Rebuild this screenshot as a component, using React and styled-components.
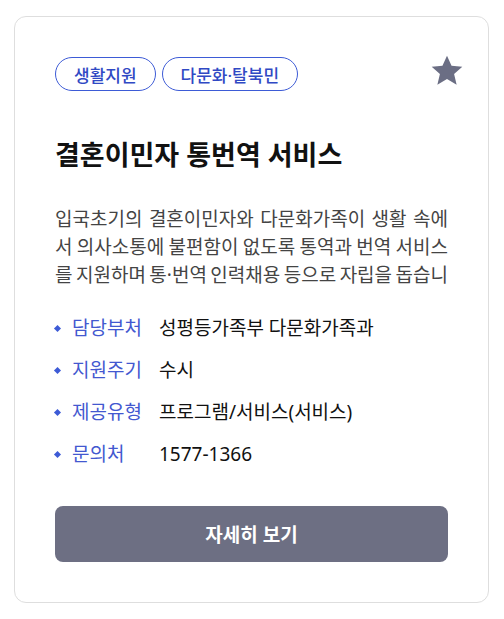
import React from 'react'
import styled, { createGlobalStyle } from 'styled-components'

const GlobalStyle = createGlobalStyle`
  body {
    margin: 0;
    background: #ffffff;
    font-family: "Noto Sans", "Noto Sans CJK KR", sans-serif;
  }
`

const Page = styled.div`
  padding: 16px 15px 16px 14px;
`

const Card = styled.div`
  width: 475px;
  box-sizing: border-box;
  border: 1px solid #dedede;
  border-radius: 12px;
  padding: 40px 40px 40px 40px;
  background: #fff;
`

const TopRow = styled.div`
  display: flex;
  align-items: flex-start;
  justify-content: space-between;
`

const Tags = styled.div`
  display: flex;
  gap: 6px;
`

const Tag = styled.span`
  display: inline-flex;
  align-items: center;
  height: 34px;
  box-sizing: border-box;
  padding: 0 18px;
  border: 1px solid #3d5bd6;
  border-radius: 17px;
  color: #3049c4;
  font-size: 17px;
  font-weight: 500;
`

const StarButton = styled.button`
  border: 0;
  background: none;
  padding: 0;
  margin: -4px -16px 0 0;
  width: 34px;
  height: 36px;
  display: flex;
  align-items: center;
  justify-content: center;
  cursor: pointer;
`

const Title = styled.h2`
  margin: 46px 0 0;
  font-size: 27px;
  line-height: 36px;
  font-weight: 700;
  color: #111;
`

const Desc = styled.p`
  margin: 32px 0 0;
  font-size: 19px;
  line-height: 28px;
  word-spacing: -2px;
  height: 84px;
  overflow: hidden;
  color: #444;
  text-align: justify;
`

const InfoList = styled.ul`
  list-style: none;
  margin: 26px 0 0;
  padding: 0;
  display: flex;
  flex-direction: column;
  gap: 15px;
`

const InfoRow = styled.li`
  display: flex;
  align-items: center;
  font-size: 19px;
  line-height: 27px;
`

const Bullet = styled.span`
  width: 5px;
  height: 5px;
  background: #3d5bd6;
  transform: rotate(45deg);
  margin: 0 12px 0 0;
  flex-shrink: 0;
`

const Label = styled.span`
  width: 87px;
  flex-shrink: 0;
  color: #4358d0;
`

const Value = styled.span`
  color: #111;
`

const DetailButton = styled.button`
  margin-top: 38px;
  width: 100%;
  height: 56px;
  border: 0;
  border-radius: 8px;
  background: #6d6f83;
  color: #fff;
  font-family: inherit;
  font-size: 19px;
  font-weight: 700;
  cursor: pointer;
`

const info = [
  { label: '담당부처', value: '성평등가족부 다문화가족과' },
  { label: '지원주기', value: '수시' },
  { label: '제공유형', value: '프로그램/서비스(서비스)' },
  { label: '문의처', value: '1577-1366' },
]

const Star = () => (
  <svg width="34" height="34" viewBox="0 0 24 24">
    <path
      fill="#6b6e84"
      d="M12 1.2l3.2 7.1 7.6.7-5.8 5.1 1.8 7.6L12 17.7l-6.8 4 1.8-7.6-5.8-5.1 7.6-.7z"
    />
  </svg>
)

const App = () => {
  return (
    <Page>
      <GlobalStyle />
      <Card>
        <TopRow>
          <Tags>
            <Tag>생활지원</Tag>
            <Tag>다문화·탈북민</Tag>
          </Tags>
          <StarButton aria-label="즐겨찾기">
            <Star />
          </StarButton>
        </TopRow>
        <Title>결혼이민자 통번역 서비스</Title>
        <Desc>
          입국초기의 결혼이민자와 다문화가족이 생활 속에서 의사소통에 불편함이 없도록 통역과 번역 서비스를 지원하며 통·번역 인력채용 등으로 자립을 돕습니다.
        </Desc>
        <InfoList>
          {info.map((item, i) => (
            <InfoRow key={i}>
              <Bullet />
              <Label>{item.label}</Label>
              <Value>{item.value}</Value>
            </InfoRow>
          ))}
        </InfoList>
        <DetailButton>자세히 보기</DetailButton>
      </Card>
    </Page>
  )
}

export default App
